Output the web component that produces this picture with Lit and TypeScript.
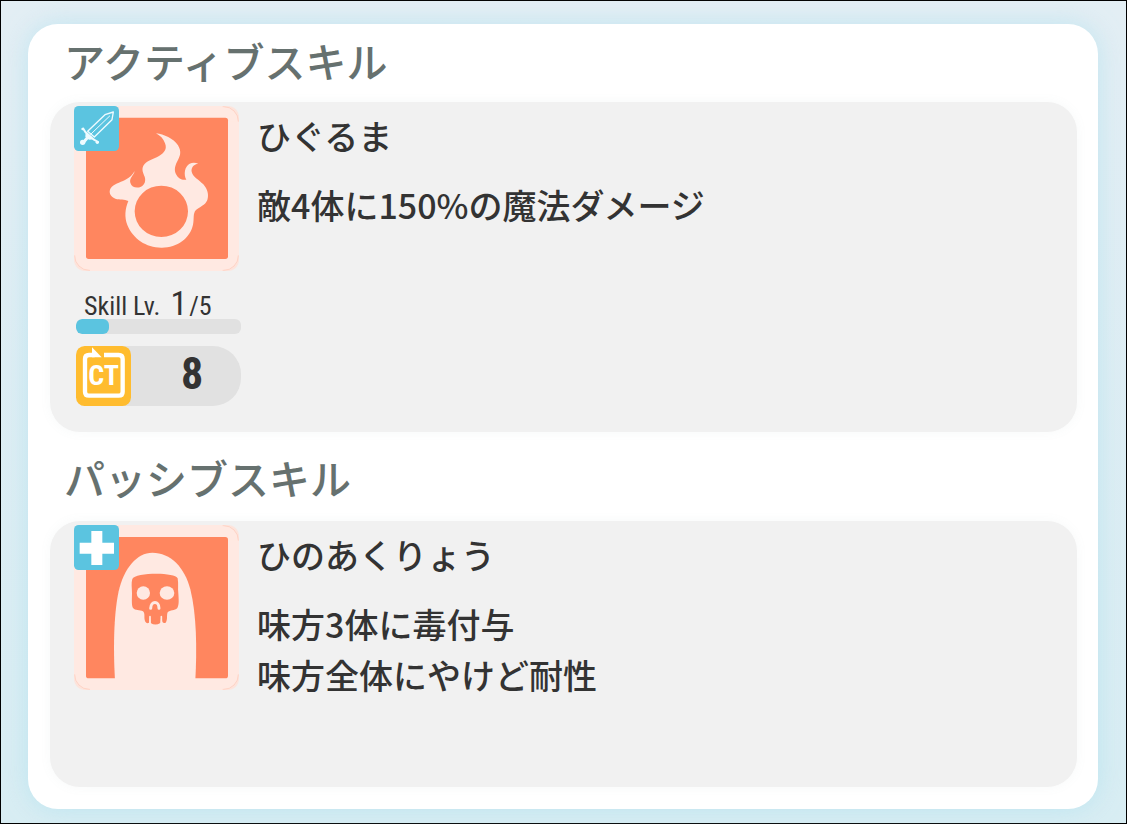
import { LitElement, html, css, svg, nothing, type TemplateResult } from "lit";
import { customElement, property } from "lit/decorators.js";

interface Skill {
  name: string;
  lines: string[];
  art: "flame" | "ghost";
  badge: "sword" | "plus";
  level?: number;
  maxLevel?: number;
  cooldown?: number;
}

const ACTIVE: Skill = {
  name: "ひぐるま",
  lines: ["敵4体に150%の魔法ダメージ"],
  art: "flame",
  badge: "sword",
  level: 1,
  maxLevel: 5,
  cooldown: 8,
};

const PASSIVE: Skill = {
  name: "ひのあくりょう",
  lines: ["味方3体に毒付与", "味方全体にやけど耐性"],
  art: "ghost",
  badge: "plus",
};

const flame = svg`
  <path fill="#ffe9e2" fill-rule="evenodd" d="M288 115 C312 118 340 130 354 151 C366 171 360 184 352 199
    C343 216 341 231 353 245 C361 253 371 256 379 254 C370 238 374 214 389 206 C397 202 406 202 415 206
    C400 208 393 218 395 230 C398 246 416 253 430 268 C443 283 447 300 442 315 C436 331 418 336 408 345
    C398 355 403 372 399 389 C390 430 352 457 306 458 C260 459 219 432 202 390 C193 366 195 342 205 318
    C193 311 180 316 166 311 C151 306 145 291 152 280 C161 267 179 263 195 255 C210 248 218 239 224 228
    C222 240 207 250 211 263 C215 277 230 281 243 275 C254 269 258 258 254 245 C250 234 244 224 250 212
    C259 197 279 193 297 183 C313 174 322 162 315 145 C310 131 301 122 288 115 Z
    M304 272 A80 77 0 1 0 304 426 A80 77 0 1 0 304 272 Z"/>`;

const ghost = svg`
  <path fill="#ffe9e2" d="M165 492 C160 410 160 300 176 226 C191 157 231 110 277 110
    C332 110 374 154 391 220 C410 296 411 400 406 492 Z"/>
  <path fill="#ff865f" d="M217 189 C224 169 345 167 353 187 C356 205 353 216 355 232 C356 249 358 266 352 276
    C344 285 330 281 323 289 C319 298 324 311 317 320 Q311 323 307 318 L304 300 L301 321
    Q286 330 272 321 L270 300 L267 320 Q260 324 256 317 C250 306 257 294 249 286
    C240 281 225 284 219 276 C214 267 216 247 216 231 C216 216 213 202 217 189 Z"/>
  <ellipse cx="250" cy="231" rx="20" ry="20" fill="#ffe9e2"/>
  <ellipse cx="321" cy="231" rx="22" ry="20" fill="#ffe9e2"/>
  <path fill="none" stroke="#ffe9e2" stroke-width="9" stroke-linecap="round"
    d="M272 277 C273 254 297 254 297 277"/>
  <path fill="none" stroke="#ffe9e2" stroke-width="5" stroke-linecap="round" d="M270 302 V320 M304 302 V320"/>`;

const sword = svg`
  <g fill="none" stroke="#effbff" stroke-linejoin="round" stroke-linecap="round">
    <path stroke-width="4" d="M53 94 L105 44 L130 36 L126 59 L73 111 Z"/>
    <path stroke-width="3" d="M62 103 L119 48"/>
    <path stroke-width="6" d="M40 86 L46 96 L72 119 L84 126"/>
    <path stroke-width="9" d="M56 109 L42 125"/>
  </g>
  <path fill="#effbff" d="M47 94 L72 118 L57 119 L46 110 Z"/>
  <circle cx="38" cy="127" r="8" fill="#effbff"/>
  <circle cx="38" cy="87" r="4" fill="#effbff"/>
  <circle cx="82" cy="127" r="5" fill="#effbff"/>`;

const plus = svg`<path fill="#fff" d="M64 36 H97 V71 H132 V104 H97 V138 H64 V104 H29 V71 H64 Z"/>`;

@customElement("skill-icon")
class SkillIcon extends LitElement {
  @property() art: Skill["art"] = "flame";
  @property() badge: Skill["badge"] = "sword";

  static styles = css`
    :host {
      display: block;
      position: relative;
      width: 165px;
      height: 165px;
    }
    svg {
      display: block;
      width: 100%;
      height: 100%;
    }
    .badge {
      position: absolute;
      top: 0;
      left: 0;
      width: 45px;
      height: 45px;
    }
  `;

  render() {
    const isFlame = this.art === "flame";
    return html`
      <svg class="art" viewBox=${isFlame ? "42 33 495 495" : "42 27 495 495"} aria-hidden="true">
        <rect x="42" y=${isFlame ? 33 : 27} width="495" height="495" rx="34" fill="#fde4dc" />
        <rect x="44" y=${isFlame ? 35 : 29} width="491" height="491" rx="44" fill="#ffe9e2"
          stroke="#ffd3c5" stroke-width="3" />
        <rect x="42" y=${isFlame ? 80 : 74} width="495" height="401" fill="#ffe9e2" />
        <rect x="90" y=${isFlame ? 33 : 27} width="398" height="495" fill="#ffe9e2" />
        <rect x="78" y=${isFlame ? 68 : 63} width="426" height="424" rx="8" fill="#ff865f" />
        ${isFlame ? flame : ghost}
      </svg>
      <svg class="badge" viewBox="12 18 135 135" aria-hidden="true">
        <rect x="12" y="18" width="135" height="135" rx="14" fill="#5bc4e0" />
        ${this.badge === "sword" ? sword : plus}
      </svg>
    `;
  }
}

@customElement("skill-panel")
class SkillPanel extends LitElement {
  @property({ attribute: false }) skill!: Skill;

  static styles = css`
    :host {
      display: flex;
      gap: 16px;
      box-sizing: border-box;
      min-height: 266px;
      padding: 4px 24px 26px;
      border-radius: 30px;
      background: #f1f1f1;
      box-shadow: 0 0 12px rgba(120, 150, 160, 0.06);
      color: #333;
    }
    .side {
      flex: none;
      width: 167px;
    }
    .stats {
      display: flex;
      flex-direction: column;
      margin-left: 2px;
    }
    .level {
      display: flex;
      align-items: baseline;
      height: 48px;
      padding-left: 8px;
      box-sizing: border-box;
      line-height: 64px;
      white-space: nowrap;
      font-family: "Roboto Condensed", "Liberation Sans Narrow", "Liberation Sans", sans-serif;
      font-size: 26px;
    }
    .current {
      margin: 0 2px 0 10px;
      font-size: 34px;
    }
    .track {
      height: 15px;
      border-radius: 6px;
      background: #e1e1e1;
      overflow: hidden;
    }
    .fill {
      height: 100%;
      border-radius: 6px;
      background: #5bc4e0;
    }
    .cooldown {
      display: flex;
      height: 60px;
      margin-top: 12px;
      border-radius: 12px 28px 28px 12px;
      background: #e1e1e1;
      font-family: "Roboto Condensed", "Liberation Sans Narrow", "Liberation Sans", sans-serif;
      font-weight: 700;
    }
    .ct {
      display: grid;
      place-items: center;
      width: 55px;
      color: #fff;
      font-size: 28px;
      line-height: 60px;
    }
    .ct > * {
      grid-area: 1 / 1;
    }
    .ct svg {
      display: block;
      width: 55px;
      height: 60px;
    }
    .turns {
      flex: 1;
      padding-left: 12px;
      text-align: center;
      font-size: 44px;
      line-height: 56px;
    }
    .text {
      flex: 1;
      min-width: 0;
      padding-top: 4px;
      font-size: 34px;
      font-weight: 500;
      line-height: 51px;
    }
    h3,
    p {
      margin: 0;
      font: inherit;
    }
    .description {
      margin-top: 18px;
    }
  `;

  private renderStats(): TemplateResult | typeof nothing {
    const { level, maxLevel, cooldown } = this.skill;
    if (level === undefined || maxLevel === undefined) return nothing;
    return html`
      <div class="stats">
        <div class="level">
          <span>Skill Lv.</span><span class="current">${level}</span><span>/${maxLevel}</span>
        </div>
        <div class="track" role="progressbar" aria-label="Skill Lv."
          aria-valuemin="0" aria-valuemax=${maxLevel} aria-valuenow=${level}>
          <div class="fill" style="width: ${(level / maxLevel) * 100}%"></div>
        </div>
        <div class="cooldown">
          <div class="ct">
            <svg viewBox="48 213 165 180" aria-hidden="true">
              <rect x="48" y="213" width="165" height="180" rx="26" fill="#ffbc2f" />
              <path fill="none" stroke="#fff" stroke-width="13"
                d="M132 240 H176 Q188 240 188 252 V350 Q188 362 176 362 H87 Q75 362 75 350 V252 Q75 240 87 240 H104" />
              <path fill="#fff" d="M96 217 L125 247 H96 Z" />
            </svg>
            <span>CT</span>
          </div>
          <div class="turns">${cooldown}</div>
        </div>
      </div>
    `;
  }

  render() {
    const { name, lines, art, badge } = this.skill;
    return html`
      <div class="side">
        <skill-icon art=${art} badge=${badge}></skill-icon>
        ${this.renderStats()}
      </div>
      <div class="text">
        <h3>${name}</h3>
        <div class="description">${lines.map((line) => html`<p>${line}</p>`)}</div>
      </div>
    `;
  }
}

@customElement("app-root")
class AppRoot extends LitElement {
  static styles = css`
    :host {
      display: block;
      box-sizing: border-box;
      min-height: 100vh;
      padding: 23px 28px 14px 27px;
      border: 1px solid #000;
      background: linear-gradient(#e3eef4, #d8edf3);
      font-family: "Noto Sans CJK JP", sans-serif;
    }
    .card {
      padding: 0 21px 22px 22px;
      border-radius: 30px;
      background: #fff;
      box-shadow: 0 0 24px rgba(170, 224, 238, 0.6);
    }
    h2 {
      margin: 0;
      padding: 6px 0 12px 14px;
      color: #66716f;
      font-size: 41px;
      font-weight: 500;
      line-height: 60px;
    }
    .passive {
      padding-top: 15px;
      padding-bottom: 14px;
    }
  `;

  render() {
    return html`
      <main class="card">
        <section>
          <h2>アクティブスキル</h2>
          <skill-panel .skill=${ACTIVE}></skill-panel>
        </section>
        <section>
          <h2 class="passive">パッシブスキル</h2>
          <skill-panel .skill=${PASSIVE}></skill-panel>
        </section>
      </main>
    `;
  }
}
